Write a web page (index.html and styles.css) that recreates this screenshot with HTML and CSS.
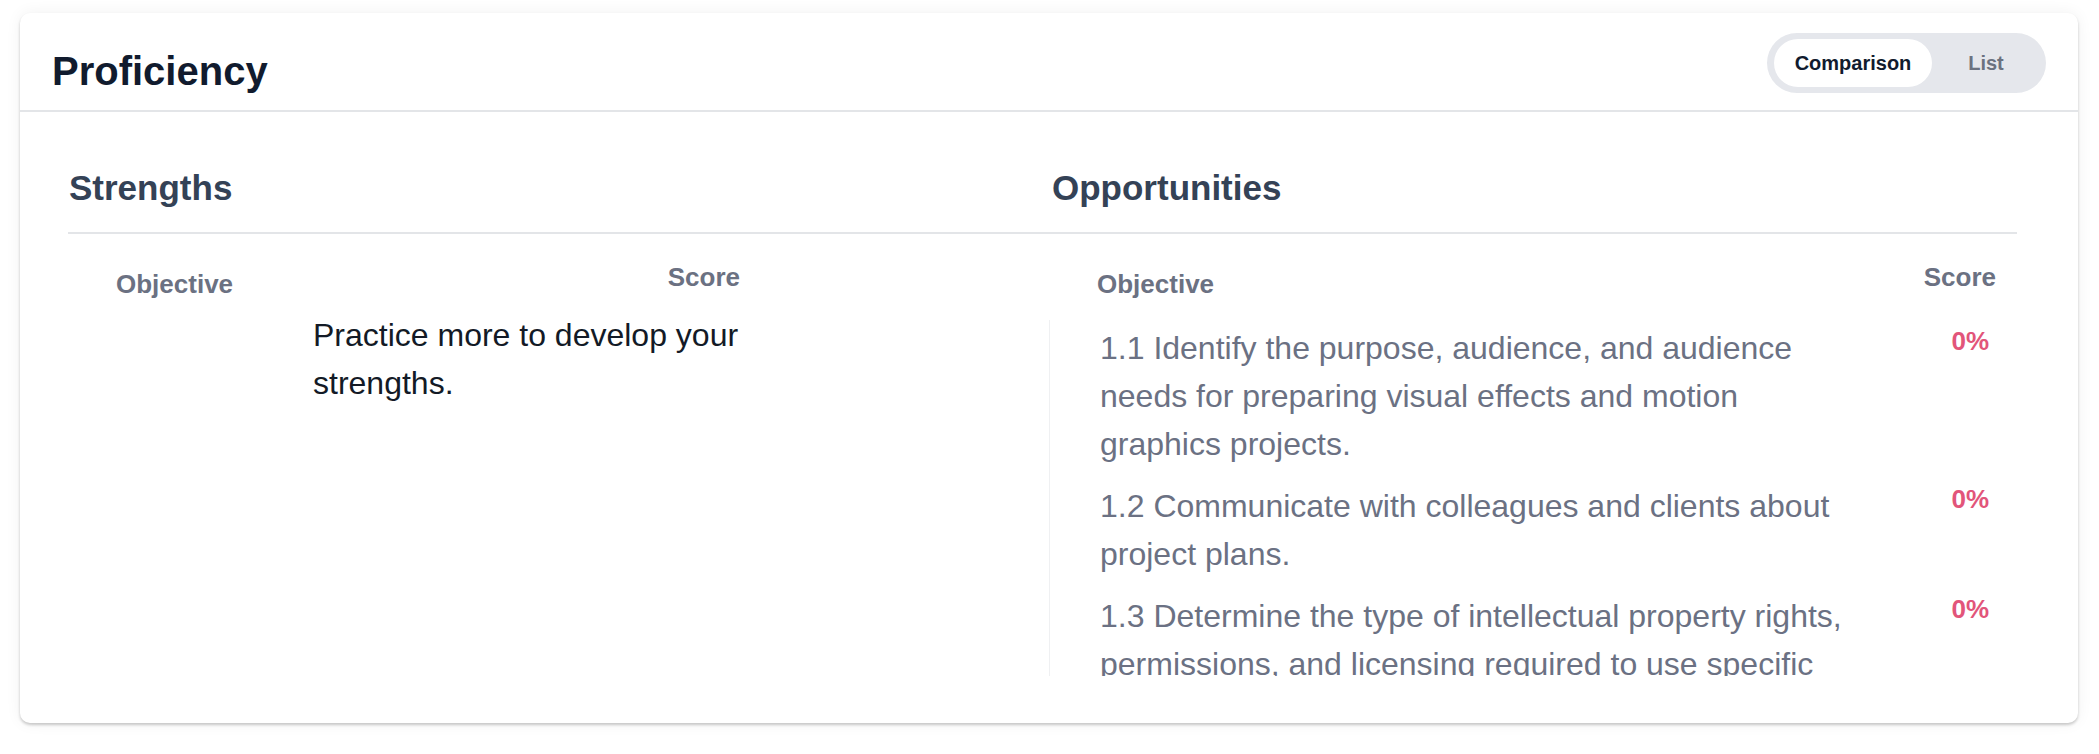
FILE: index.html
```html
<!DOCTYPE html>
<html lang="en">
<head>
<meta charset="utf-8">
<title>Proficiency</title>
<link rel="stylesheet" href="styles.css">
</head>
<body>
  <section class="card">
    <header class="card-header">
      <h1 class="title">Proficiency</h1>
      <div class="toggle">
        <span class="toggle-item is-active">Comparison</span>
        <span class="toggle-item">List</span>
      </div>
    </header>
    <div class="content">
      <div class="section-heads">
        <h2 class="section-title">Strengths</h2>
        <h2 class="section-title">Opportunities</h2>
      </div>
      <div class="columns">
        <div class="col col-left">
          <div class="table-head table-head-left">
            <span class="th th-objective">Objective</span>
            <span class="th th-score">Score</span>
          </div>
          <p class="empty-msg">Practice more to develop your strengths.</p>
        </div>
        <div class="col col-right">
          <div class="table-head table-head-right">
            <span class="th th-objective">Objective</span>
            <span class="th th-score">Score</span>
          </div>
          <div class="table-body">
            <div class="row">
              <span class="objective">1.1 Identify the purpose, audience, and audience needs for preparing visual effects and motion graphics projects.</span>
              <span class="score">0%</span>
            </div>
            <div class="row">
              <span class="objective">1.2 Communicate with colleagues and clients about project plans.</span>
              <span class="score">0%</span>
            </div>
            <div class="row">
              <span class="objective">1.3 Determine the type of intellectual property rights, permissions, and licensing required to use specific content.</span>
              <span class="score">0%</span>
            </div>
          </div>
        </div>
      </div>
    </div>
  </section>
</body>
</html>
```

FILE: styles.css
```css
* { box-sizing: border-box; }

html, body {
  margin: 0;
  background: #ffffff;
}

body {
  padding: 13px 21px 31px 20px;
  font-family: "Liberation Sans", Arial, Helvetica, sans-serif;
}

.card {
  height: 710px;
  background: #ffffff;
  border-radius: 10px;
  box-shadow: 0 2px 3px rgba(0, 0, 0, 0.2), 0 0 16px rgba(0, 0, 0, 0.06);
  overflow: hidden;
}

.card-header {
  display: flex;
  justify-content: space-between;
  align-items: flex-start;
  height: 99px;
  padding: 0 32px 0 32px;
  border-bottom: 2px solid #e3e5e8;
}

.title {
  margin: 34px 0 0 0;
  font-size: 40px;
  line-height: 48px;
  font-weight: 700;
  color: #111b2e;
}

.toggle {
  display: flex;
  margin-top: 20px;
  padding: 6px 6px 6px 7px;
  background: #e5e7ec;
  border-radius: 30px;
}

.toggle-item {
  display: flex;
  align-items: center;
  justify-content: center;
  height: 48px;
  font-size: 20px;
  font-weight: 700;
  color: #6b7280;
  border-radius: 24px;
  width: 108px;
}

.toggle-item.is-active {
  width: 158px;
  background: #ffffff;
  color: #111b2e;
}

.content {
  padding: 55px 61px 0 48px;
}

.section-heads {
  display: grid;
  grid-template-columns: 983px 1fr;
  padding: 0 0 23px 1px;
  border-bottom: 2px solid #e3e5e8;
}

.section-title {
  margin: 0;
  font-size: 35px;
  line-height: 42px;
  font-weight: 700;
  color: #344256;
}

.columns {
  display: grid;
  grid-template-columns: 981px 1fr;
}

.table-head {
  display: flex;
  justify-content: space-between;
  align-items: flex-start;
  padding-left: 48px;
}

.table-head-left {
  width: 672px;
  height: 77px;
}

.table-head-right {
  height: 86px;
  padding-right: 21px;
}

.th {
  font-size: 26px;
  line-height: 32px;
  font-weight: 700;
  color: #6b7182;
}

.th-objective { margin-top: 34px; }
.th-score { margin-top: 27px; }

.empty-msg {
  margin: 0 0 0 245px;
  width: 445px;
  font-size: 32px;
  line-height: 48px;
  color: #131a26;
}

.table-body {
  height: 356px;
  overflow: hidden;
  border-left: 1px solid #eff0f2;
  padding: 0 28px 0 50px;
}

.row {
  display: grid;
  grid-template-columns: 762px 1fr;
  padding: 4px 0 10px;
}

.objective {
  font-size: 32px;
  line-height: 48px;
  color: #6b7183;
}

.score {
  justify-self: end;
  font-size: 26px;
  line-height: 34px;
  font-weight: 700;
  color: #e2557a;
}
```
